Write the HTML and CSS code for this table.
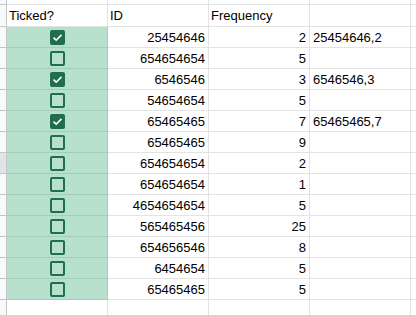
FILE: index.html
```html
<!DOCTYPE html>
<html>
<head>
<meta charset="utf-8">
<link rel="stylesheet" href="styles.css">
</head>
<body>
<div class="sheet">
  <div class="row strip">
    <div class="stub"></div><div class="cell"></div><div class="cell"></div><div class="cell"></div><div class="cell"></div><div class="cell last"></div>
  </div>
  <div class="row head">
    <div class="stub"></div>
    <div class="cell txt">Ticked?</div>
    <div class="cell txt">ID</div>
    <div class="cell txt">Frequency</div>
    <div class="cell"></div>
    <div class="cell last"></div>
  </div>
  <div class="row">
    <div class="stub"></div>
    <div class="cell tick"><span class="box on"><svg viewBox="0 0 15 15"><path d="M3.5 7.6 L6.2 10.2 L11.5 4.9"/></svg></span></div>
    <div class="cell num">25454646</div>
    <div class="cell num">2</div>
    <div class="cell txt d">25454646,2</div>
    <div class="cell last"></div>
  </div>
  <div class="row">
    <div class="stub"></div>
    <div class="cell tick"><span class="box"></span></div>
    <div class="cell num">654654654</div>
    <div class="cell num">5</div>
    <div class="cell"></div>
    <div class="cell last"></div>
  </div>
  <div class="row">
    <div class="stub"></div>
    <div class="cell tick"><span class="box on"><svg viewBox="0 0 15 15"><path d="M3.5 7.6 L6.2 10.2 L11.5 4.9"/></svg></span></div>
    <div class="cell num">6546546</div>
    <div class="cell num">3</div>
    <div class="cell txt d">6546546,3</div>
    <div class="cell last"></div>
  </div>
  <div class="row">
    <div class="stub"></div>
    <div class="cell tick"><span class="box"></span></div>
    <div class="cell num">54654654</div>
    <div class="cell num">5</div>
    <div class="cell"></div>
    <div class="cell last"></div>
  </div>
  <div class="row">
    <div class="stub"></div>
    <div class="cell tick"><span class="box on"><svg viewBox="0 0 15 15"><path d="M3.5 7.6 L6.2 10.2 L11.5 4.9"/></svg></span></div>
    <div class="cell num">65465465</div>
    <div class="cell num">7</div>
    <div class="cell txt d">65465465,7</div>
    <div class="cell last"></div>
  </div>
  <div class="row">
    <div class="stub"></div>
    <div class="cell tick"><span class="box"></span></div>
    <div class="cell num">65465465</div>
    <div class="cell num">9</div>
    <div class="cell"></div>
    <div class="cell last"></div>
  </div>
  <div class="row">
    <div class="stub sel"></div>
    <div class="cell tick"><span class="box"></span></div>
    <div class="cell num">654654654</div>
    <div class="cell num">2</div>
    <div class="cell"></div>
    <div class="cell last"></div>
  </div>
  <div class="row">
    <div class="stub"></div>
    <div class="cell tick"><span class="box"></span></div>
    <div class="cell num">654654654</div>
    <div class="cell num">1</div>
    <div class="cell"></div>
    <div class="cell last"></div>
  </div>
  <div class="row">
    <div class="stub"></div>
    <div class="cell tick"><span class="box"></span></div>
    <div class="cell num">4654654654</div>
    <div class="cell num">5</div>
    <div class="cell"></div>
    <div class="cell last"></div>
  </div>
  <div class="row">
    <div class="stub"></div>
    <div class="cell tick"><span class="box"></span></div>
    <div class="cell num">565465456</div>
    <div class="cell num">25</div>
    <div class="cell"></div>
    <div class="cell last"></div>
  </div>
  <div class="row">
    <div class="stub"></div>
    <div class="cell tick"><span class="box"></span></div>
    <div class="cell num">654656546</div>
    <div class="cell num">8</div>
    <div class="cell"></div>
    <div class="cell last"></div>
  </div>
  <div class="row">
    <div class="stub"></div>
    <div class="cell tick"><span class="box"></span></div>
    <div class="cell num">6454654</div>
    <div class="cell num">5</div>
    <div class="cell"></div>
    <div class="cell last"></div>
  </div>
  <div class="row">
    <div class="stub"></div>
    <div class="cell tick"><span class="box"></span></div>
    <div class="cell num">65465465</div>
    <div class="cell num">5</div>
    <div class="cell"></div>
    <div class="cell last"></div>
  </div>
  <div class="row">
    <div class="stub"></div>
    <div class="cell"></div>
    <div class="cell"></div>
    <div class="cell"></div>
    <div class="cell"></div>
    <div class="cell last"></div>
  </div>
</div>
</body>
</html>
```

FILE: styles.css
```css
html, body {
  margin: 0;
  padding: 0;
  background: #ffffff;
  overflow: hidden;
}

.sheet {
  width: 416px;
  height: 315px;
  overflow: hidden;
  display: flex;
  flex-direction: column;
  font-family: "Liberation Sans", Arial, sans-serif;
  font-size: 13px;
  line-height: 15px;
  color: #000000;
}

.row {
  display: flex;
  height: 21px;
  flex: none;
}

.row.strip {
  height: 5px;
}

.row.head {
  height: 22px;
}

.stub {
  width: 6px;
  flex: none;
  background: #f8f9fa;
  border-right: 1px solid #c4c7c5;
  border-bottom: 1px solid #c4c7c5;
}

.stub.sel {
  background: #e1e3e6;
}

.cell {
  width: 100px;
  flex: none;
  border-right: 1px solid #e2e3e3;
  border-bottom: 1px solid #e2e3e3;
  display: flex;
  align-items: flex-end;
  padding-bottom: 2px;
  white-space: nowrap;
  overflow: hidden;
}

.cell.last {
  width: 10px;
}

.head .cell {
  padding-bottom: 3px;
}

.txt {
  padding-left: 2px;
  width: 98px;
}

.txt.d {
  padding-left: 3px;
  width: 97px;
}

.num {
  justify-content: flex-end;
  padding-right: 3px;
  width: 97px;
}

.tick {
  background: #b7e1cd;
  border-right-color: #a4cdb9;
  border-bottom-color: #a4cdb9;
  align-items: center;
  justify-content: center;
  padding-bottom: 0;
}

.box {
  width: 15px;
  height: 15px;
  box-sizing: border-box;
  border: 2px solid #1f6e4e;
  border-radius: 2px;
  display: block;
  position: relative;
}

.box.on {
  background: #1f6e4e;
}

.box svg {
  position: absolute;
  left: -2px;
  top: -2px;
  width: 15px;
  height: 15px;
  fill: none;
  stroke: #ffffff;
  stroke-width: 1.6;
}
```
